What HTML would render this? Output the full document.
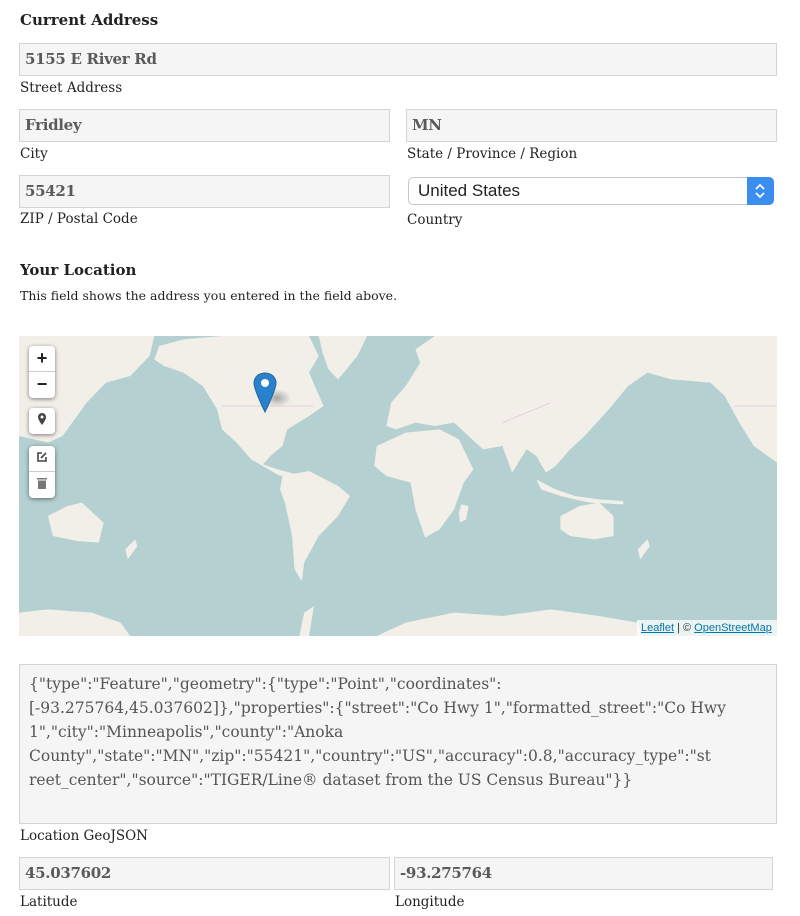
<!DOCTYPE html>
<html><head><meta charset="utf-8"><style>
*{box-sizing:border-box;margin:0;padding:0}
body{width:800px;height:916px;background:#fff;font-family:"DejaVu Serif","Liberation Serif",serif;color:#222;position:relative;overflow:hidden}
.a{position:absolute}
h3{position:absolute;font-size:15px;font-weight:bold;color:#222}
.in{position:absolute;background:#f5f5f5;border:1px solid #d4d4d4;color:#5a5a5a;font-size:15px;font-weight:bold;padding:0 0 0 5px;line-height:31px;white-space:nowrap;letter-spacing:-0.3px}
.lb{position:absolute;font-size:13.5px;color:#222;white-space:nowrap}
.sel{position:absolute;left:408px;top:177px;width:366px;height:28px;border:1px solid #c8c8c8;border-radius:5px;background:#fff;font-family:"Liberation Sans",sans-serif;font-size:17px;line-height:26px;padding-left:9px;color:#222}
.sel .b{position:absolute;right:-1px;top:-1px;width:27px;height:28px;background:#3a8ef0;border-radius:0 5px 5px 0}
.ctl{position:absolute;left:29px;width:26px;background:#fff;border-radius:4px;box-shadow:0 1px 4px rgba(0,0,0,.5)}
.ctl div{height:26px;border-bottom:1px solid #ccc;text-align:center;font:bold 18px/25px "Liberation Sans",sans-serif;color:#222}
.ctl div:last-child{border-bottom:none}
</style></head><body>
<h3 style="left:20px;top:11px">Current Address</h3>
<div class="in" style="left:19px;top:43px;width:758px;height:33px">5155 E River Rd</div>
<div class="lb" style="left:20px;top:80px">Street Address</div>
<div class="in" style="left:19px;top:109px;width:371px;height:33px">Fridley</div>
<div class="lb" style="left:20px;top:146px">City</div>
<div class="in" style="left:406px;top:109px;width:371px;height:33px">MN</div>
<div class="lb" style="left:407px;top:146px">State / Province / Region</div>
<div class="in" style="left:19px;top:175px;width:371px;height:33px">55421</div>
<div class="lb" style="left:20px;top:211px">ZIP / Postal Code</div>
<div class="sel">United States<div class="b"><svg width="27" height="28" viewBox="0 0 27 28"><path d="M9 12l4-4 4 4M9 16l4 4 4-4" stroke="#fff" stroke-width="1.8" fill="none"/></svg></div></div>
<div class="lb" style="left:407px;top:212px">Country</div>
<h3 style="left:20px;top:261px">Your Location</h3>
<div class="lb" style="left:20px;top:288px;font-size:12.5px">This field shows the address you entered in the field above.</div>

<svg class="a" style="left:19px;top:336px" width="758" height="300" viewBox="0 0 1568 900" preserveAspectRatio="none">
<rect width="1568" height="900" fill="#b5d0d0"/>
<g fill="#f2efe9">
<path d="M0 0L280 0L270 60L230 120L180 140L140 200L110 260L90 300L60 320L0 300Z"/>
<path d="M290 30L340 10L420 0L600 0L620 60L600 110L630 210L600 240L555 280L545 330L520 360L505 385L535 400L560 410L575 415L540 420L480 370L450 320L420 280L410 220L380 150L340 110L300 90L280 70Z"/>
<path d="M620 0L720 0L700 60L660 130L640 100L628 50Z"/>
<path d="M545 420L600 405L660 450L685 480L660 540L620 600L590 680L585 735L570 700L565 600L550 500L540 460Z"/>
<path d="M820 40L860 0L1568 0L1568 380L1520 330L1490 260L1460 180L1430 140L1350 130L1300 110L1260 150L1220 220L1170 300L1140 340L1110 390L1090 410L1070 360L1050 340L1020 410L1000 330L960 340L930 300L900 260L860 270L820 260L780 280L760 270L770 200L800 150L830 80Z"/>
<path d="M740 330L800 290L870 280L910 310L940 400L920 440L900 520L870 580L840 605L820 520L810 440L760 420L735 390Z"/>
<path d="M915 505L930 510L925 550L912 560L910 530Z"/>
<path d="M1120 540L1160 510L1200 500L1230 540L1230 600L1190 610L1140 600L1120 580Z"/>
<path d="M60 540L100 510L130 500L175 560L165 620L120 615L70 600Z"/>
<path d="M1070 430L1110 460L1150 480L1200 490L1250 495L1250 505L1180 500L1120 480L1080 460Z"/>
<path d="M1280 640L1300 610L1305 630L1285 670Z"/><path d="M220 640L240 610L245 630L225 670Z"/>
<path d="M0 830L60 820L150 830L210 860L230 900L0 900Z"/>
<path d="M740 900L800 860L900 830L1000 840L1100 820L1200 840L1280 860L1290 900Z"/>
<path d="M580 900L590 830L610 810L600 900Z"/>
</g>
<g fill="none" stroke="#d5b3d5" stroke-width="1.5">
<path d="M420 210L610 210"/><path d="M1480 210L1568 210"/><path d="M1000 260L1100 200"/>
</g>
</svg>
<div class="ctl" style="top:346px"><div>+</div><div>−</div></div>
<div class="ctl" style="top:408px;height:26px"><div><svg width="12" height="14" viewBox="0 0 12 14"><path d="M6 1a4 4 0 0 1 4 4c0 3-4 8-4 8S2 8 2 5a4 4 0 0 1 4-4z" fill="#444"/><circle cx="6" cy="5" r="1.5" fill="#fff"/></svg></div></div>
<div class="ctl" style="top:446px"><div><svg width="14" height="14" viewBox="0 0 14 14"><path d="M7 3H3v8h8V7" stroke="#444" stroke-width="1.6" fill="none"/><path d="M6 8l5-5" stroke="#444" stroke-width="1.6"/></svg></div><div><svg width="12" height="14" viewBox="0 0 12 14"><rect x="1" y="2" width="10" height="1.5" fill="#777"/><rect x="2" y="4.5" width="8" height="8.5" fill="#777"/></svg></div></div>
<svg class="a" style="left:253px;top:372px" width="40" height="42" viewBox="0 0 40 42"><defs><radialGradient id="s"><stop offset="0" stop-color="rgba(0,0,0,.3)"/><stop offset="1" stop-color="rgba(0,0,0,0)"/></radialGradient></defs><ellipse cx="24" cy="26" rx="14" ry="9" fill="url(#s)"/><path d="M12 1C5 1 1 6 1 11c0 7 11 29 11 29S23 18 23 11C23 6 19 1 12 1z" fill="#2a81cb" stroke="#2165a0"/><circle cx="12" cy="11" r="4" fill="#fff"/></svg>
<div class="a" style="left:637px;top:620px;width:140px;height:16px;background:rgba(255,255,255,.75);font:11px/16px 'Liberation Sans',sans-serif;color:#333;padding-left:4px"><span style="color:#0078a8;text-decoration:underline">Leaflet</span> | © <span style="color:#0078a8;text-decoration:underline">OpenStreetMap</span></div>

<div class="a" style="left:19px;top:664px;width:758px;height:160px;background:#f5f5f5;border:1px solid #d4d4d4;color:#555;font-size:15.5px;line-height:24px;padding:7px 0 0 9px;white-space:nowrap;overflow:hidden">{"type":"Feature","geometry":{"type":"Point","coordinates":<br>[-93.275764,45.037602]},"properties":{"street":"Co Hwy 1","formatted_street":"Co Hwy<br>1","city":"Minneapolis","county":"Anoka<br>County","state":"MN","zip":"55421","country":"US","accuracy":0.8,"accuracy_type":"st<br>reet_center","source":"TIGER/Line® dataset from the US Census Bureau"}}</div>
<div class="lb" style="left:20px;top:828px">Location GeoJSON</div>
<div class="in" style="left:19px;top:857px;width:371px;height:33px">45.037602</div>
<div class="lb" style="left:20px;top:894px">Latitude</div>
<div class="in" style="left:394px;top:857px;width:379px;height:33px">-93.275764</div>
<div class="lb" style="left:395px;top:894px">Longitude</div>
</body></html>
